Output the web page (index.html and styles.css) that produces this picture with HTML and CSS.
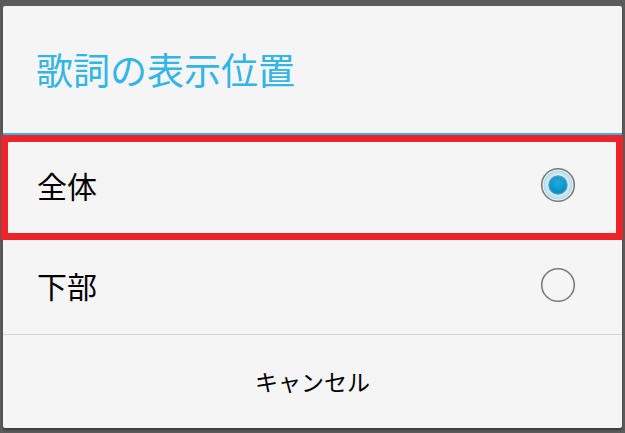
FILE: index.html
```html
<!DOCTYPE html>
<html lang="ja">
<head>
  <meta charset="UTF-8">
  <meta name="viewport" content="width=device-width, initial-scale=1.0">
  <title>歌詞の表示位置</title>
  <link rel="stylesheet" href="styles.css">
</head>
<body>

  <div class="dialog">
    <div class="dialog-title">歌詞の表示位置</div>
    <div class="title-rule"></div>

    <div class="option">
      <span class="option-label">全体</span>
      <svg class="radio" width="36" height="36" viewBox="0 0 36 36">
        <defs>
          <radialGradient id="halo" cx="50%" cy="50%" r="50%">
            <stop offset="60%" stop-color="#e3f3fa"/>
            <stop offset="100%" stop-color="#a9dcf0"/>
          </radialGradient>
          <radialGradient id="dot" cx="50%" cy="35%" r="60%">
            <stop offset="0%" stop-color="#22ace0"/>
            <stop offset="100%" stop-color="#008fc6"/>
          </radialGradient>
        </defs>
        <circle cx="18" cy="18" r="16.3" fill="#f2f2f2" stroke="#7c7c7c" stroke-width="1.6"/>
        <circle cx="18" cy="18" r="14.5" fill="url(#halo)"/>
        <circle cx="18" cy="18" r="9.2" fill="url(#dot)" stroke="#6a9cb0" stroke-width="1.2"/>
      </svg>
    </div>

    <div class="option option-last">
      <span class="option-label">下部</span>
      <svg class="radio" width="36" height="36" viewBox="0 0 36 36">
        <circle cx="18" cy="18" r="16.3" fill="none" stroke="#7c7c7c" stroke-width="1.6"/>
      </svg>
    </div>

    <div class="dialog-actions">
      <button type="button" class="cancel-btn">キャンセル</button>
    </div>

    <!-- highlight frame drawn over the first option -->
    <div class="highlight"></div>
  </div>

</body>
</html>
```

FILE: styles.css
```css
body {
  margin: 0;
  height: 433px;
  overflow: hidden;
  background-color: #5b5b5b;
  font-family: "Noto Sans CJK JP", "Noto Sans", sans-serif;
}
.dialog {
  position: relative;
  margin: 6px 3px 0 3px;
  height: 422px;
  background-color: #f5f5f5;
  border-radius: 2px;
  box-shadow: 0 2px 2px rgba(0, 0, 0, 0.35);
  display: flex;
  flex-direction: column;
}
.dialog-title {
  height: 127px;
  padding-left: 33px;
  display: flex;
  align-items: center;
  font-size: 37px;
  line-height: 1;
  color: #33b5e5;
}
.title-rule {
  height: 2px;
  background-color: #33b5e5;
}
.option {
  height: 100px;
  padding: 0 46px 0 34px;
  display: flex;
  align-items: center;
  justify-content: space-between;
}
.option-last {
  height: 99px;
  border-bottom: 1px solid #d6d6d6;
}
.option-label {
  font-size: 30px;
  line-height: 1;
  color: #000;
}
.radio {
  display: block;
}
.dialog-actions {
  flex: 1;
  display: flex;
}
.cancel-btn {
  flex: 1;
  background: none;
  border: none;
  padding: 0 0 2px 0;
  font-family: inherit;
  font-size: 23px;
  color: #000;
  cursor: pointer;
}
.highlight {
  position: absolute;
  left: -2px;
  top: 129px;
  width: 608px;
  height: 91px;
  border: 7px solid #ee2229;
  border-radius: 1px;
}
```
